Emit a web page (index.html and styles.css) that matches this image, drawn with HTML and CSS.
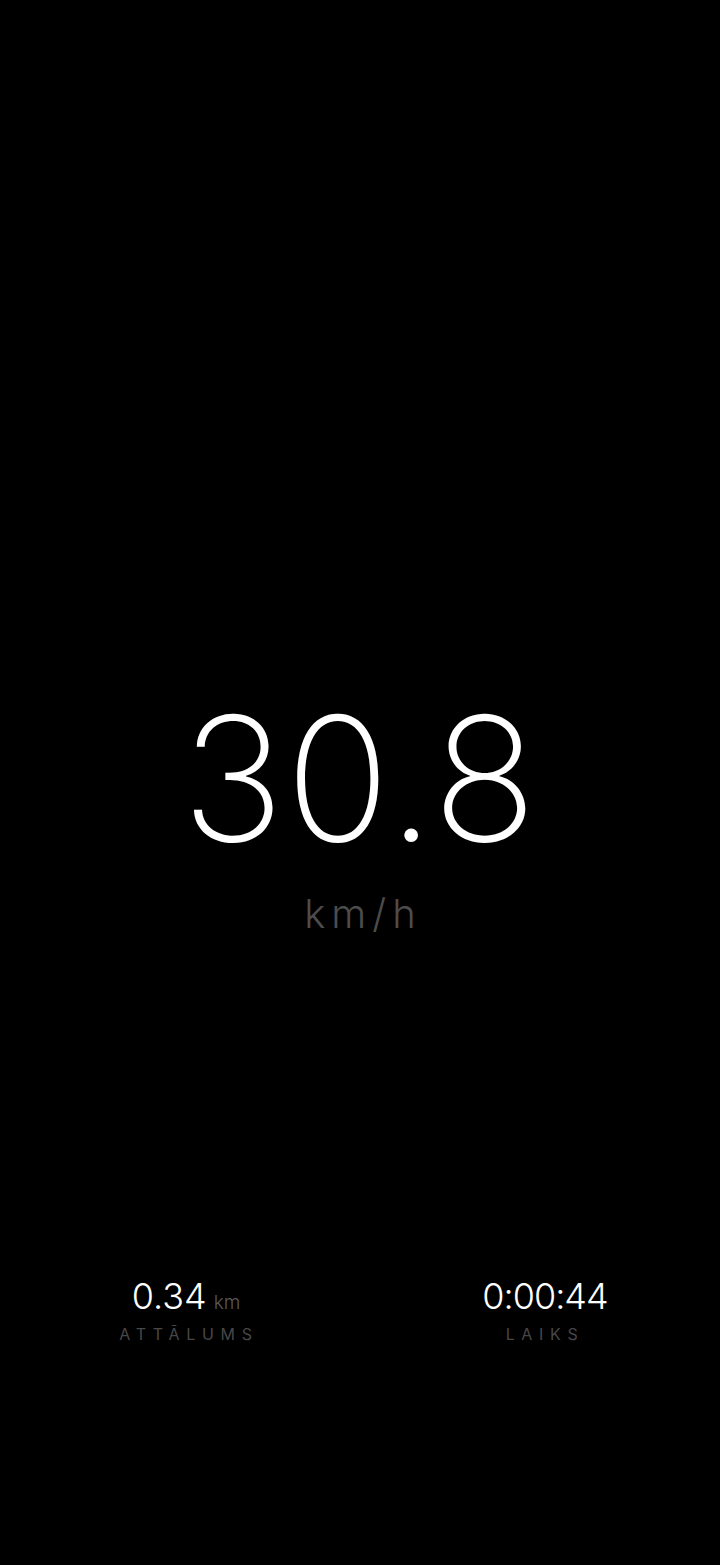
FILE: index.html
```html
<!DOCTYPE html>
<html lang="lv">
<head>
<meta charset="utf-8">
<link rel="stylesheet" href="styles.css">
</head>
<body>
<div class="screen">
  <div class="speed">
    <div class="speed-value">30.8</div>
    <div class="speed-unit">km/h</div>
  </div>
  <div class="stats">
    <div class="stat">
      <div class="stat-value">0.34<span class="stat-unit">km</span></div>
      <div class="stat-label">ATTĀLUMS</div>
    </div>
    <div class="stat">
      <div class="stat-value stat-time">0:00:44</div>
      <div class="stat-label">LAIKS</div>
    </div>
  </div>
</div>
</body>
</html>
```
FILE: styles.css
```css
html, body {
  margin: 0;
  padding: 0;
  background: #000;
}
.screen {
  width: 720px;
  height: 1565px;
  background: #000;
  color: #fff;
  font-family: Inter, "Noto Sans", sans-serif;
  display: flex;
  flex-direction: column;
}
.speed {
  padding-top: 682px;
  display: flex;
  flex-direction: column;
  align-items: center;
}
.speed-value {
  font-size: 173px;
  font-weight: 200;
  line-height: 192px;
  letter-spacing: 1.5px;
}
.speed-unit {
  margin-top: 10px;
  font-size: 40px;
  font-weight: 300;
  color: #4c4c4c;
  letter-spacing: 6px;
  line-height: 60px;
  padding-left: 6px;
}
.stats {
  margin-top: 331px;
  display: grid;
  grid-template-columns: 1fr 1fr;
  padding: 0 0 0 8px;
}
.stat {
  display: flex;
  flex-direction: column;
  align-items: center;
}
.stat-value {
  font-size: 36px;
  font-weight: 300;
  line-height: 42px;
}
.stat-time {
  letter-spacing: -1px;
  padding-left: 6px;
}
.stat-unit {
  font-size: 19px;
  line-height: 1;
  color: #5a5a5a;
  margin-left: 7px;
}
.stat-label {
  margin-top: 7px;
  font-size: 16px;
  font-weight: 400;
  color: #474747;
  letter-spacing: 6.7px;
  padding-left: 6px;
  line-height: 20px;
}
```
